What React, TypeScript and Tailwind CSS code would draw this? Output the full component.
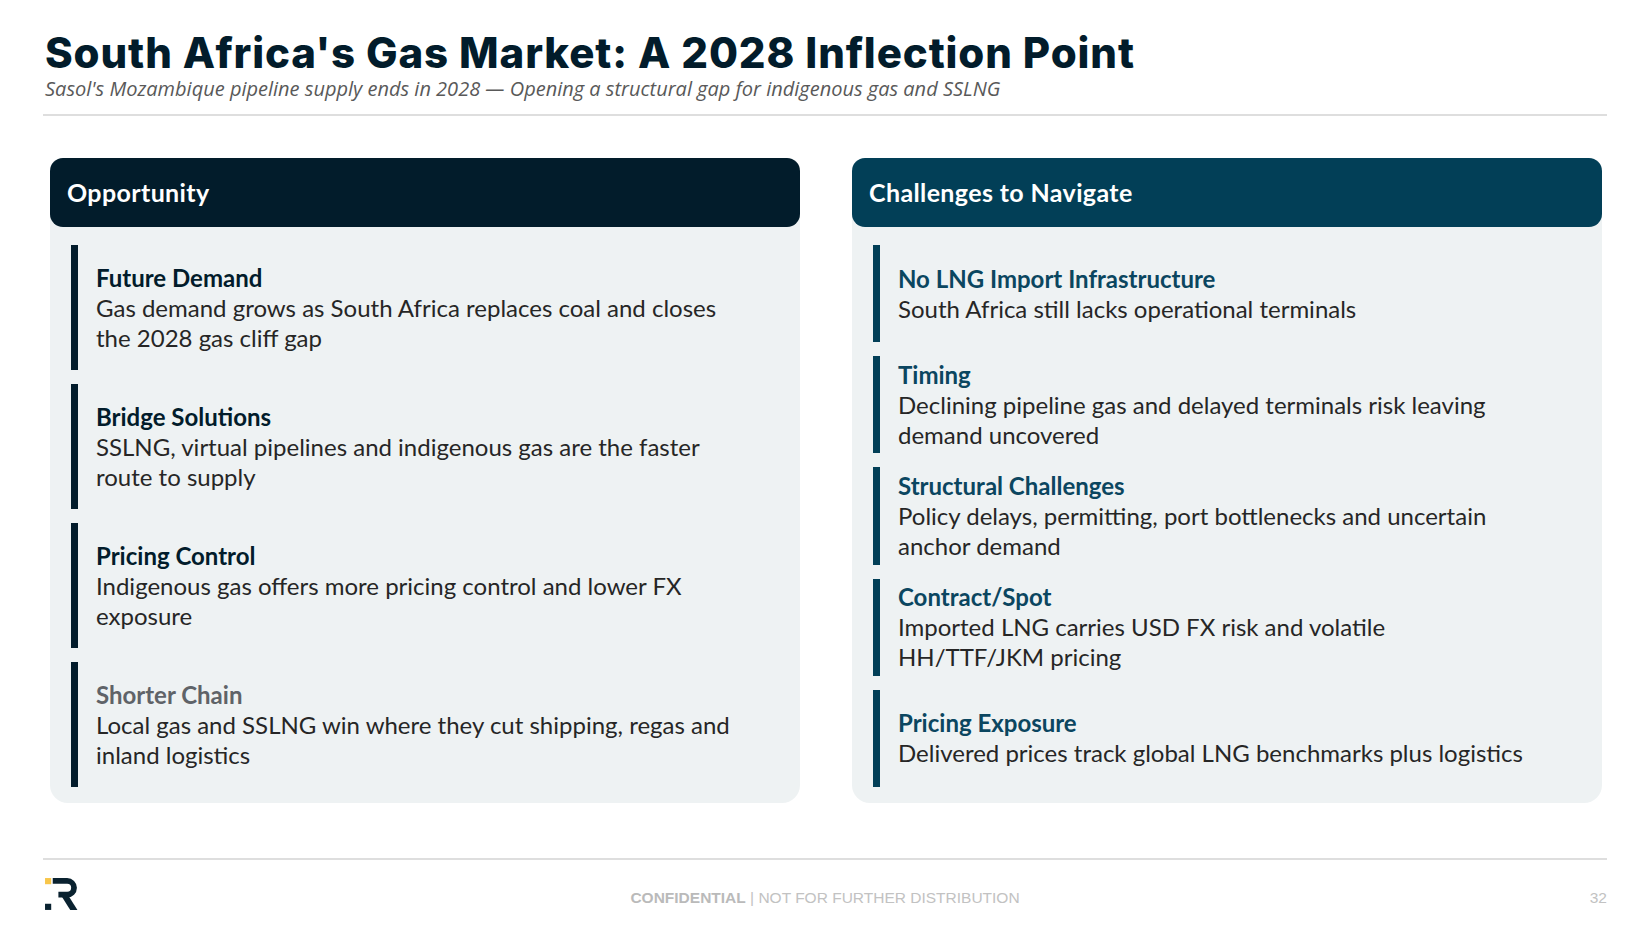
import React from "react";

type Item = {
  title: string;
  lines: string[];
  muted?: boolean;
};

const opportunities: Item[] = [
  { title: "Future Demand", lines: ["Gas demand grows as South Africa replaces coal and closes", "the 2028 gas cliff gap"] },
  { title: "Bridge Solutions", lines: ["SSLNG, virtual pipelines and indigenous gas are the faster", "route to supply"] },
  { title: "Pricing Control", lines: ["Indigenous gas offers more pricing control and lower FX", "exposure"] },
  { title: "Shorter Chain", lines: ["Local gas and SSLNG win where they cut shipping, regas and", "inland logistics"], muted: true },
];

const challenges: Item[] = [
  { title: "No LNG Import Infrastructure", lines: ["South Africa still lacks operational terminals"] },
  { title: "Timing", lines: ["Declining pipeline gas and delayed terminals risk leaving", "demand uncovered"] },
  { title: "Structural Challenges", lines: ["Policy delays, permitting, port bottlenecks and uncertain", "anchor demand"] },
  { title: "Contract/Spot", lines: ["Imported LNG carries USD FX risk and volatile", "HH/TTF/JKM pricing"] },
  { title: "Pricing Exposure", lines: ["Delivered prices track global LNG benchmarks plus logistics"] },
];

const Logo = () => (
  <svg width="36" height="35" viewBox="0 0 35 34">
    <rect x="1" y="1" width="6" height="6" fill="#f8c64a" />
    <rect x="1" y="26" width="6" height="6" fill="#0a2230" />
    <path d="M8.5 3.8 H22.5 A6.7 6.7 0 0 1 22.5 17.2 H14" fill="none" stroke="#0a2230" strokeWidth="5.6" />
    <polygon points="14.5,14.5 21.5,14.5 32.5,32 25.5,32" fill="#0a2230" />
  </svg>
);

const Card = ({ heading, headBg, barColor, titleColor, items }: { heading: string; headBg: string; barColor: string; titleColor: string; items: Item[] }) => (
  <div className="flex h-[645px] flex-col rounded-[18px] bg-[#eef2f3]">
    <div className={`flex h-[69px] items-center rounded-[13px] px-[17px] ${headBg}`}>
      <span className="text-[25px] font-bold tracking-[0.015em] text-white">{heading}</span>
    </div>
    <div className="flex flex-1 flex-col gap-[14px] pl-[21px] pr-[20px] pt-[18px] pb-[16px]">
      {items.map((it) => (
        <div key={it.title} className={`flex flex-1 flex-col justify-center border-l-[7px] pl-[18px] ${barColor}`}>
          <div className={`text-[24px] font-bold leading-[30px] ${it.muted ? "text-[#5f6368]" : titleColor}`}>{it.title}</div>
          {it.lines.map((l) => (
            <div key={l} className="whitespace-nowrap text-[24px] leading-[30px] text-[#262626]">{l}</div>
          ))}
        </div>
      ))}
    </div>
  </div>
);

export default function App() {
  return (
    <div className="h-[938px] w-[1650px] bg-white px-[43px] pt-[32px] font-['Lato',sans-serif]">
      <h1 className="pl-[2px] font-['Inter',sans-serif] text-[42px] font-extrabold leading-[42px] tracking-[0.021em] text-[#021c2b]">
        South Africa's Gas Market: A 2028 Inflection Point
      </h1>
      <p className="mt-[2px] pl-[2px] font-['Open_Sans',sans-serif] text-[20px] italic leading-[25px] text-[#595959]">
        Sasol's Mozambique pipeline supply ends in 2028 — Opening a structural gap for indigenous gas and SSLNG
      </p>
      <div className="mt-[13px] h-[2px] bg-[#dedede]" />

      <div className="mt-[42px] grid grid-cols-2 gap-[52px] pl-[7px] pr-[5px]">
        <Card heading="Opportunity" headBg="bg-[#021c2b]" barColor="border-[#021c2b]" titleColor="text-[#021c2b]" items={opportunities} />
        <Card heading="Challenges to Navigate" headBg="bg-[#023f57]" barColor="border-[#023f57]" titleColor="text-[#0b4660]" items={challenges} />
      </div>

      <div className="mt-[55px] h-[2px] bg-[#dedede]" />
      <div className="mt-[17px] grid h-[35px] grid-cols-[1fr_auto_1fr] items-center font-['Liberation_Sans',Arial,sans-serif] text-[15.5px] text-[#c2c2c2]">
        <div className="pl-[1px]">
          <Logo />
        </div>
        <div className="pt-[6px]">
          <span className="font-bold text-[#bababa]">CONFIDENTIAL</span> | NOT FOR FURTHER DISTRIBUTION
        </div>
        <div className="pt-[6px] text-right">32</div>
      </div>
    </div>
  );
}
